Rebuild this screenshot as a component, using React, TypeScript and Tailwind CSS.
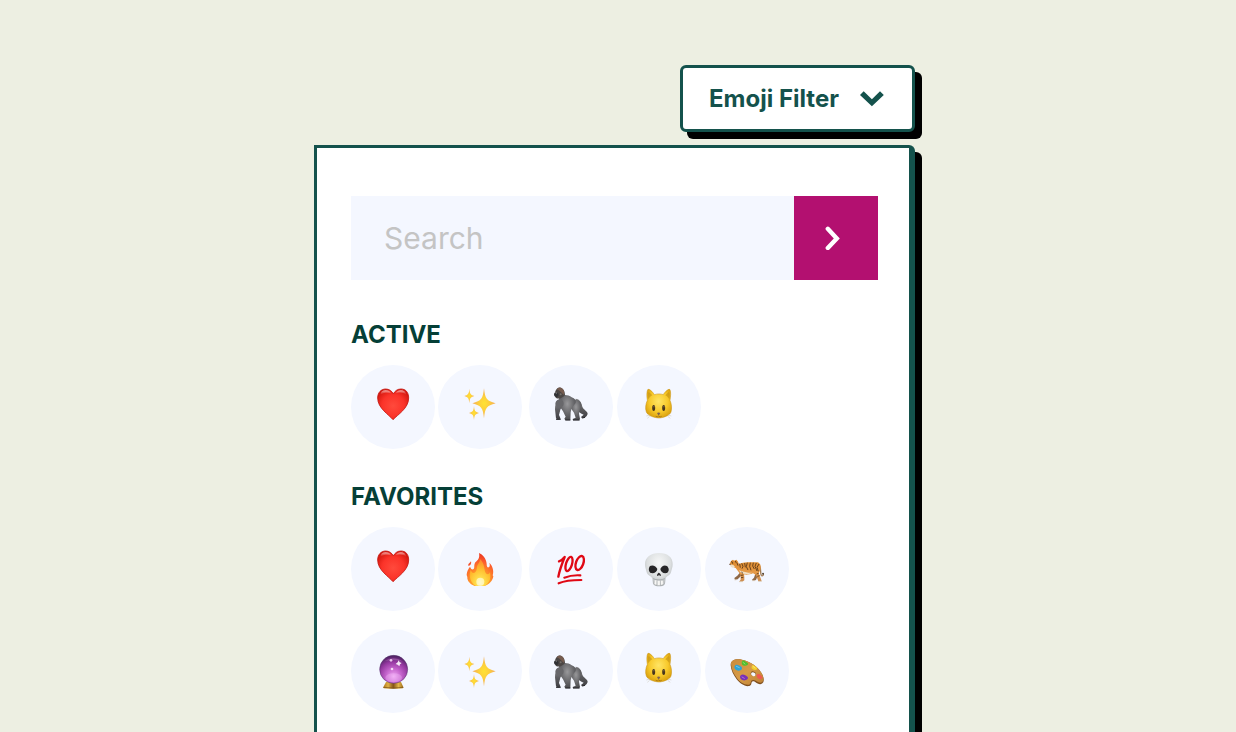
import type { ReactNode } from "react";

function Gradients() {
  return (
    <svg className="absolute size-0" aria-hidden="true">
      <defs>
        <radialGradient id="heart" cx="0.5" cy="0.55" r="0.6">
          <stop offset="0" stopColor="#ff4a3c" />
          <stop offset="0.6" stopColor="#fb3329" />
          <stop offset="1" stopColor="#d3170f" />
        </radialGradient>
        <linearGradient id="shine" x1="0" y1="0" x2="0" y2="1">
          <stop offset="0" stopColor="#fff" stopOpacity="0.65" />
          <stop offset="1" stopColor="#ff8a80" stopOpacity="0" />
        </linearGradient>
        <radialGradient id="star">
          <stop offset="0" stopColor="#ffe232" />
          <stop offset="0.45" stopColor="#fdcf3c" />
          <stop offset="1" stopColor="#f2a95c" />
        </radialGradient>
        <linearGradient id="fur" x1="0" y1="0" x2="0" y2="1">
          <stop offset="0" stopColor="#8b8b8d" />
          <stop offset="0.5" stopColor="#5c5c5f" />
          <stop offset="1" stopColor="#3e3e42" />
        </linearGradient>
        <radialGradient id="furlight" cx="0.5" cy="0.35" r="0.65">
          <stop offset="0" stopColor="#98989a" />
          <stop offset="0.55" stopColor="#6b6b6e" />
          <stop offset="1" stopColor="#48484b" />
        </radialGradient>
        <radialGradient id="cat" cx="0.5" cy="0.42" r="0.64">
          <stop offset="0" stopColor="#ffe565" />
          <stop offset="0.55" stopColor="#f8ca2c" />
          <stop offset="1" stopColor="#d59a08" />
        </radialGradient>
        <radialGradient id="fire" cx="0.5" cy="0.92" r="0.85">
          <stop offset="0" stopColor="#ffb52b" />
          <stop offset="0.45" stopColor="#ff9329" />
          <stop offset="0.8" stopColor="#fb5a2b" />
          <stop offset="1" stopColor="#ee3f22" />
        </radialGradient>
        <radialGradient id="flame" cx="0.5" cy="0.88" r="0.8">
          <stop offset="0" stopColor="#ffffe0" />
          <stop offset="0.25" stopColor="#fff45a" />
          <stop offset="0.65" stopColor="#ffd02f" />
          <stop offset="1" stopColor="#ffa42c" />
        </radialGradient>
        <radialGradient id="bone" cx="0.5" cy="0.3" r="0.7">
          <stop offset="0" stopColor="#f7f8f8" />
          <stop offset="0.6" stopColor="#dcdfe0" />
          <stop offset="1" stopColor="#a9adaf" />
        </radialGradient>
        <linearGradient id="tiger" x1="0" y1="0" x2="0" y2="1">
          <stop offset="0" stopColor="#dd8a2c" />
          <stop offset="0.6" stopColor="#e59a48" />
          <stop offset="1" stopColor="#c98b52" />
        </linearGradient>
        <radialGradient id="ball" cx="0.5" cy="0.75" r="0.75">
          <stop offset="0" stopColor="#efa6f2" />
          <stop offset="0.35" stopColor="#c767cf" />
          <stop offset="0.7" stopColor="#93379f" />
          <stop offset="1" stopColor="#47205c" />
        </radialGradient>
        <linearGradient id="brass">
          <stop offset="0" stopColor="#a8731b" />
          <stop offset="0.25" stopColor="#e0b043" />
          <stop offset="0.5" stopColor="#85541a" />
          <stop offset="0.75" stopColor="#e3b548" />
          <stop offset="1" stopColor="#9a6a1b" />
        </linearGradient>
        <linearGradient id="wood" x1="0" y1="0" x2="1" y2="1">
          <stop offset="0" stopColor="#c98c3d" />
          <stop offset="0.5" stopColor="#d79b46" />
          <stop offset="1" stopColor="#bd7f35" />
        </linearGradient>
      </defs>
    </svg>
  );
}

const star = (cx: number, cy: number, h: number, v: number) => (
  <path
    d="M0-1C.1-.3 .22-.17 1 0C.22.17 .1.3 0 1C-.1.3-.22.17-1 0C-.22-.17-.1-.3 0-1Z"
    transform={`translate(${cx} ${cy}) scale(${h} ${v})`}
    fill="url(#star)"
  />
);

const art: Record<string, ReactNode> = {
  heart: (
    <>
      <path
        d="M0 38C-12 23-46 4-46-27C-46-44-35-54-22-54C-11-54-3-48 1-39C5-48 13-54 24-54C38-54 47-44 47-27C47 4 14 23 0 38Z"
        fill="url(#heart)"
        stroke="#c4150d"
        strokeWidth="2.5"
      />
      <path d="M-38-36C-37-46-31-50-22-50C-13-50-8-46-6-41C-14-44-30-44-38-36Z" fill="url(#shine)" />
      <path d="M8-41C11-46 16-50 24-50C32-50 38-46 40-36C32-44 18-45 8-41Z" fill="url(#shine)" />
    </>
  ),
  sparkles: (
    <>
      {star(12, -11, 35, 45)}
      {star(-32, -33, 15, 22)}
      {star(-18, 18, 15, 21)}
    </>
  ),
  gorilla: (
    <>
      <path d="M14-25C24-25 31-16 34-1C38 9 51 13 50 21C47 30 40 34 33 34L30 30L38 23C29 19 22 14 17 8Z" fill="url(#fur)" />
      <path d="M-41-20C-48-10-49 5-47 16L-45 34L-40 38L-31 37L-33 31L-36 24L-32 8L-22-11Z" fill="url(#fur)" />
      <path d="M3-16C14-28 29-20 31-8C31 4 24 11 24 20L27 36L24 40L6 40L5 36L14 32L9 17L-1 3Z" fill="url(#furlight)" />
      <path d="M-36-30C-24-39-8-37 2-29C12-26 15-20 14-12L2 3L-1 16L-2 40L-17 40L-20 35L-16 29L-24 13L-35-3Z" fill="url(#furlight)" />
      <path d="M-32-24C-43-22-50-14-45-5C-42 3-31 5-25-2C-19-9-22-20-32-24Z" fill="#68686b" />
      <path d="M-48-44C-45-55-38-60-31-58C-23-56-18-47-18-36C-25-27-35-23-45-27L-50-35C-51-39-48-41-48-44Z" fill="#4b4644" />
      <path d="M-43-53C-39-59-32-61-27-56C-20-51-19-43-22-36C-28-43-34-49-43-53Z" fill="#755b4e" />
      <path d="M-49-43L-39-42L-37-35L-42-29L-49-32L-51-38Z" fill="#303134" />
      <path d="M-47-43L-42-41" stroke="#a4a4a5" strokeWidth="2" />
      <circle cx="-31" cy="-38" r="3" fill="#76706b" />
      <path d="M-45 37H-31M-17 39H-2M6 39H26M34 33L42 31" stroke="#29292d" strokeWidth="3" />
    </>
  ),
  cat: (
    <>
      <path
        d="M-34-52C-30-56-19-46-14-37C-5-40 5-40 13-37C18-46 29-56 33-52C36-45 35-32 33-20C38-9 39 5 36 15C32 26 14 32 0 33C-14 32-33 27-38 15C-42 5-40-9-35-20C-37-32-37-46-34-52Z"
        fill="url(#cat)"
        stroke="#c58d0c"
        strokeWidth="1.5"
      />
      <path d="M-31-46L-20-35C-26-32-29-28-32-23C-34-31-34-40-31-46ZM30-46L19-35C25-32 28-28 31-23C33-31 33-40 30-46Z" fill="#b8860e" opacity="0.5" />
      <ellipse cx="-16" cy="3" rx="4.5" ry="9" fill="#47351c" />
      <ellipse cx="14" cy="3" rx="4.5" ry="9" fill="#47351c" />
      <circle cx="-15" cy="-1" r="1.6" fill="#b9a46c" />
      <circle cx="15" cy="-1" r="1.6" fill="#b9a46c" />
      <path d="M-6 18Q-1 15 4 18L0 25H-2Z" fill="#7d6254" />
      <path d="M-10 28Q-5 32-1 27Q4 32 8 28" fill="none" stroke="#a5700d" strokeWidth="2.5" />
      <path d="M-29 24L-38 27M-28 28L-35 34M27 24L37 27M26 28L34 34" stroke="#d4d2c6" strokeWidth="2" />
    </>
  ),
  fire: (
    <>
      <path
        d="M-3-48C8-44 19-31 20-15C20-8 22-4 26-5C30-7 30-13 28-19C37-10 43 5 38 19L40 22C38 36 27 47 14 51H-16C-29 46-39 36-38 24L-40 18C-40 8-35-1-30-7C-28-2-25 2-21 1C-14-1-20-11-14-20C-6-27 0-33-3-48Z"
        fill="url(#fire)"
      />
      <path d="M-1-31C2-20-8-16-9-6C-10 5-13 12-19 12C-24 12-26 6-28 2C-34 20-30 41-12 51H13C27 44 34 30 30 10C27 17 21 18 17 12C12 3 15-17-1-31Z" fill="url(#flame)" opacity="0.7" />
      <ellipse cx="1" cy="38" rx="12" ry="12" fill="#ffffd8" opacity="0.7" />
      <path d="M-27-23C-25-17-28-10-34-9C-38-15-30-18-27-23Z" fill="#f4512c" />
    </>
  ),
  hundred: (
    <g fill="none" stroke="#e00814" strokeLinecap="round" strokeLinejoin="round">
      <path d="M-36-23C-29-25-23-31-19-36C-27-16-34 2-38 23" strokeWidth="7" />
      <ellipse cx="-6" cy="-15" rx="9" ry="22" transform="rotate(17 -6 -15)" strokeWidth="7" />
      <ellipse cx="26" cy="-18" rx="11" ry="22" transform="rotate(20 26 -18)" strokeWidth="7" />
      <path d="M-20 26C-5 20 12 18 28 19" strokeWidth="6.5" />
      <path d="M-37 43C-17 34 10 33 31 33" strokeWidth="6.5" />
    </g>
  ),
  skull: (
    <>
      <path
        d="M0-48C27-48 42-34 41-14C41-5 38 2 36 10C34 20 21 21 20 29L18 44C15 51 6 52 0 52C-8 52-15 50-18 44L-20 29C-22 21-35 20-37 10C-39 2-42-5-42-14C-42-35-25-48 0-48Z"
        fill="url(#bone)"
      />
      <path d="M-27-9C-19-14-8-8-5 0C-6 10-15 14-25 12C-33 6-31-4-27-9ZM24-9C16-14 7-8 4 0C5 10 14 14 24 12C32 6 30-3 24-9Z" fill="#262527" />
      <path d="M-1 11C2 10 7 18 6 21L0 19L-6 21C-7 17-3 12-1 11Z" fill="#302e30" />
      <path d="M-18 29C-8 34 8 34 18 29" fill="none" stroke="#aaaeb0" strokeWidth="3" />
      <path d="M-14 34H-7V47C-11 48-14 46-15 43ZM-5 35H3V49H-5ZM5 35H13L14 43C12 47 9 48 5 48Z" fill="#f7f7f5" />
      <path d="M-6 34V48M4 34V48M-14 34V44M13 34V44" stroke="#a7abad" strokeWidth="1.5" />
    </>
  ),
  tiger: (
    <>
      <path d="M38-9C43 0 39 12 43 19C46 23 50 19 49 14" fill="none" stroke="#a17a50" strokeWidth="4" strokeLinecap="round" />
      <path d="M-17 6L-29 20L-38 27L-36 33L-28 31L-15 18L-4 14ZM17 6L25 14L21 26L15 32L18 36L27 33L33 18Z" fill="#8f6846" />
      <path
        d="M-48-24L-42-28L-39-25L-32-28L-28-23L-24-15C-7-22 15-20 31-20C40-18 43-9 40 3L35 13L41 28L44 37H34L27 18L18 13C6 18-4 18-9 16L-8 25L-8 34L-14 38H-24L-19 32L-19 18L-25 9L-34-3L-47-8L-52-15Z"
        fill="url(#tiger)"
      />
      <path d="M-51-14L-41-12L-36-7L-44-4L-50-8ZM-25 4L-17 12L-10 14L4 16L15 11L4 11L-9 8Z" fill="#efe0c6" />
      <path d="M-48-22L-43-20M-35-24L-32-18M-30-18L-27-10M-22-16L-20-4M-16-17L-12-8L-15-1M-7-18L-5-5M1-19L-2-7L3 3M10-19L8-8L12 4M19-19L17-9L22 0M28-18L24-8L30 6M36-15L30-5L34 7M-17 9L-12 13M-18 19L-11 18M-18 26L-11 25M29 15L35 13M31 22L38 20" fill="none" stroke="#553417" strokeWidth="2.6" />
      <circle cx="-43" cy="-18" r="1.6" fill="#23190f" />
      <circle cx="-51" cy="-14" r="2" fill="#4c2e22" />
      <circle cx="48" cy="14" r="2.5" fill="#3f362c" />
      <path d="M-24 38H-12M34 37H44M-37 33L-31 32M16 35H23" stroke="#ded2be" strokeWidth="2.5" />
    </>
  ),
  crystal: (
    <>
      <path d="M-21 33H24L32 50Q29 53 1 53Q-27 53-30 50Z" fill="url(#brass)" />
      <path d="M-28 49Q1 53 30 49" fill="none" stroke="#785016" strokeWidth="2" />
      <circle cx="2" cy="-5" r="42" fill="url(#ball)" stroke="#52316b" strokeWidth="1.5" />
      <ellipse cx="2" cy="20" rx="25" ry="13" fill="#fac7ff" opacity="0.3" />
      <path d="M-26-29Q2-48 30-28Q2-38-26-29Z" fill="#d4a0d8" opacity="0.3" />
      <path d="M17-32L20-26L26-24L21-20L19-14L14-19L8-21L14-26Z" fill="#fff" opacity="0.9" />
      <circle cx="-6" cy="-32" r="4" fill="#ebc6ed" />
      <circle cx="-3" cy="-6" r="4" fill="#f4d9f5" />
    </>
  ),
  palette: (
    <>
      <path
        d="M-49-17C-50-32-34-38-16-34C9-30 37-11 47 13C53 29 50 37 42 39C34 42 26 33 21 31C10 28 17 42 7 45C-6 48-22 37-31 25C-40 13-48-2-49-17Z"
        fill="#80501f"
      />
      <path
        d="M-48-20C-49-33-33-37-15-34C10-30 37-11 47 12C52 26 49 34 41 35C34 36 27 28 20 27C8 26 15 38 6 41C-7 43-22 33-30 22C-39 10-47-5-48-20Z"
        fill="url(#wood)"
      />
      <ellipse cx="19" cy="8" rx="8" ry="6.5" transform="rotate(20 19 8)" fill="#80501f" />
      <ellipse cx="19" cy="9.5" rx="7" ry="5.5" transform="rotate(20 19 9.5)" fill="#f4f7ff" />
      <path d="M-14-31C-8-34-2-26 3-23C5-17-3-15-8-16C-15-17-18-24-14-31Z" fill="#50bf2d" />
      <path d="M-37-15C-32-23-24-17-17-13C-12-6-17-2-25-1C-33-1-40-8-37-15Z" fill="#2ba3d8" />
      <path d="M15-16C20-20 26-13 30-10C32-4 25-1 20-4C14-6 12-11 15-16Z" fill="#f3cf2d" />
      <path d="M31 10C37 6 43 15 47 19C45 25 38 27 32 21C29 18 27 13 31 10Z" fill="#ef5950" />
      <path d="M-20 14C-14 8-5 11 2 18C6 24-3 29-11 28C-18 26-23 20-20 14Z" fill="#7930b7" />
      <path d="M-32-14L-23-10M-12-26L-6-21M18-14L24-9M-15 18L-8 22" stroke="#fff" strokeOpacity="0.35" strokeWidth="3" strokeLinecap="round" />
    </>
  ),
};

type Item = { name: string; low?: boolean };

const active: Item[] = [{ name: "heart" }, { name: "sparkles" }, { name: "gorilla" }, { name: "cat" }];

const favorites: Item[] = [
  { name: "heart" },
  { name: "fire" },
  { name: "hundred" },
  { name: "skull" },
  { name: "tiger" },
  { name: "crystal" },
  { name: "sparkles", low: true },
  { name: "gorilla", low: true },
  { name: "cat" },
  { name: "palette" },
];

function EmojiGroup({ title, items }: { title: string; items: Item[] }) {
  return (
    <section>
      <h2 className="text-2xl font-bold text-[#053f37]">{title}</h2>
      <div className="mt-3.5 grid grid-cols-[87px_91px_88px_88px_84px] gap-y-[18px]">
        {items.map((item, i) => (
          <button
            key={i}
            type="button"
            aria-label={item.name}
            className="flex size-[84px] items-center justify-center rounded-full bg-[#f4f7ff]"
          >
            <svg viewBox={item.low ? "-72 -84 144 144" : "-72 -72 144 144"} className="size-12" aria-hidden="true">
              {art[item.name]}
            </svg>
          </button>
        ))}
      </div>
    </section>
  );
}

export default function App() {
  return (
    <main className="flex min-h-screen flex-col bg-[#edefe2] px-4 pt-[65px] font-['Inter',sans-serif]">
      <Gradients />
      <div className="mx-auto flex w-full max-w-[608px] grow flex-col pr-[7px]">
        <button
          type="button"
          aria-expanded="true"
          className="flex h-[67px] items-center gap-[21px] self-end rounded-md border-3 border-[#14524c] bg-white pr-7 pl-[26px] text-2xl font-bold text-[#14524c] shadow-[7px_7px_0_#000]"
        >
          Emoji Filter
          <svg viewBox="0 0 24 16" className="h-4 w-6" aria-hidden="true">
            <path d="M0 4L3.7 .3L11.9 8.2L20 .3L23.8 4L11.9 15.3Z" fill="currentColor" />
          </svg>
        </button>
        <div className="mt-[13px] grow rounded-tr-md border-3 border-r-6 border-b-0 border-[#14524c] bg-white pt-12 pr-[31px] pb-[19px] pl-[34px] shadow-[7px_7px_0_#000]">
          <form className="flex h-[84px]" onSubmit={(e) => e.preventDefault()}>
            <input
              type="search"
              aria-label="Search"
              placeholder="Search"
              className="min-w-0 grow bg-[#f4f7ff] px-[33px] text-[30px] text-[#14524c] outline-none placeholder:text-[#c4c4c4]"
            />
            <button type="submit" aria-label="Submit search" className="flex w-[84px] shrink-0 items-center justify-center bg-[#b31070]">
              <svg viewBox="0 0 24 24" className="size-6" aria-hidden="true">
                <path d="M3.8 2.8L12.8 12.4L3.8 22" fill="none" stroke="#fff" strokeWidth="4.4" strokeLinecap="round" strokeLinejoin="miter" />
              </svg>
            </button>
          </form>
          <div className="mt-[39px] flex flex-col gap-8">
            <EmojiGroup title="ACTIVE" items={active} />
            <EmojiGroup title="FAVORITES" items={favorites} />
          </div>
        </div>
      </div>
    </main>
  );
}
